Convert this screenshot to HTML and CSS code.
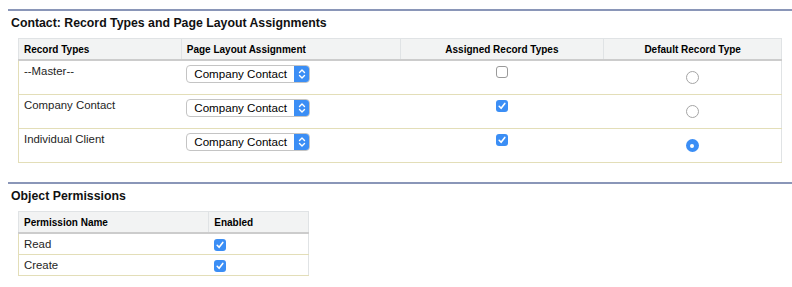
FILE: index.html
```html
<!DOCTYPE html>
<html lang="en">
<head>
    <meta charset="UTF-8">
    <title>Contact Record Types</title>
    <link rel="stylesheet" href="styles.css">
</head>
<body>
    <div class="section">
        <h2 class="section-title">Contact: Record Types and Page Layout Assignments</h2>
        <table class="list record-table">
            <thead>
                <tr>
                    <th class="col-type">Record Types</th>
                    <th class="col-layout">Page Layout Assignment</th>
                    <th class="col-assigned center">Assigned Record Types</th>
                    <th class="col-default center">Default Record Type</th>
                </tr>
            </thead>
            <tbody>
                <tr>
                    <td>--Master--</td>
                    <td>
                        <div class="select">
                            <span class="select-text">Company Contact</span>
                            <span class="select-arrows"><svg width="8" height="12" viewBox="0 0 8 12"><path d="M1.5 4.5 L4 2 L6.5 4.5 M1.5 7.5 L4 10 L6.5 7.5" fill="none" stroke="#fff" stroke-width="1.4" stroke-linecap="round" stroke-linejoin="round"/></svg></span>
                        </div>
                    </td>
                    <td class="center"><span class="check"></span></td>
                    <td class="center"><span class="radio"></span></td>
                </tr>
                <tr>
                    <td>Company Contact</td>
                    <td>
                        <div class="select">
                            <span class="select-text">Company Contact</span>
                            <span class="select-arrows"><svg width="8" height="12" viewBox="0 0 8 12"><path d="M1.5 4.5 L4 2 L6.5 4.5 M1.5 7.5 L4 10 L6.5 7.5" fill="none" stroke="#fff" stroke-width="1.4" stroke-linecap="round" stroke-linejoin="round"/></svg></span>
                        </div>
                    </td>
                    <td class="center"><span class="check checked"><svg width="12" height="12" viewBox="0 0 12 12"><path d="M3.2 6.3 L5.1 8.3 L8.8 3.4" fill="none" stroke="#fff" stroke-width="1.6" stroke-linecap="round" stroke-linejoin="round"/></svg></span></td>
                    <td class="center"><span class="radio"></span></td>
                </tr>
                <tr>
                    <td>Individual Client</td>
                    <td>
                        <div class="select">
                            <span class="select-text">Company Contact</span>
                            <span class="select-arrows"><svg width="8" height="12" viewBox="0 0 8 12"><path d="M1.5 4.5 L4 2 L6.5 4.5 M1.5 7.5 L4 10 L6.5 7.5" fill="none" stroke="#fff" stroke-width="1.4" stroke-linecap="round" stroke-linejoin="round"/></svg></span>
                        </div>
                    </td>
                    <td class="center"><span class="check checked"><svg width="12" height="12" viewBox="0 0 12 12"><path d="M3.2 6.3 L5.1 8.3 L8.8 3.4" fill="none" stroke="#fff" stroke-width="1.6" stroke-linecap="round" stroke-linejoin="round"/></svg></span></td>
                    <td class="center"><span class="radio selected"></span></td>
                </tr>
            </tbody>
        </table>
    </div>

    <div class="section">
        <h2 class="section-title">Object Permissions</h2>
        <table class="list perm-table">
            <thead>
                <tr>
                    <th class="col-name">Permission Name</th>
                    <th class="col-enabled">Enabled</th>
                </tr>
            </thead>
            <tbody>
                <tr>
                    <td>Read</td>
                    <td><span class="check checked"><svg width="12" height="12" viewBox="0 0 12 12"><path d="M3.2 6.3 L5.1 8.3 L8.8 3.4" fill="none" stroke="#fff" stroke-width="1.6" stroke-linecap="round" stroke-linejoin="round"/></svg></span></td>
                </tr>
                <tr>
                    <td>Create</td>
                    <td><span class="check checked"><svg width="12" height="12" viewBox="0 0 12 12"><path d="M3.2 6.3 L5.1 8.3 L8.8 3.4" fill="none" stroke="#fff" stroke-width="1.6" stroke-linecap="round" stroke-linejoin="round"/></svg></span></td>
                </tr>
            </tbody>
        </table>
    </div>
</body>
</html>
```

FILE: styles.css
```css
body {
    margin: 0;
    padding: 9px 0 0 8px;
    background-color: #ffffff;
    font-family: "Liberation Sans", Arial, sans-serif;
    color: #1e1e1e;
}

.section {
    border-top: 2px solid #8a96b8;
    margin-bottom: 19px;
}

.section-title {
    margin: 0;
    padding: 5px 3px 0 3px;
    font-size: 12.3px;
    line-height: 15px;
    font-weight: bold;
    color: #111111;
}

.list {
    border-collapse: collapse;
    margin: 7px 0 0 10px;
    border: 1px solid #e0e3e5;
    border-bottom-color: #e3deb8;
    border-left-color: #e3deb8;
}

.list th {
    background-color: #f2f3f3;
    font-size: 10px;
    font-weight: bold;
    text-align: left;
    padding: 0 5px;
    height: 20px;
    border-bottom: 2px solid #cccccc;
    border-left: 1px solid #e0e3e5;
    color: #000000;
}

.list td {
    font-size: 11.4px;
    padding: 4px 5px 0 5px;
    vertical-align: top;
    border-top: 1px solid #e3deb8;
}

.list th.center,
.list td.center {
    text-align: center;
}

.record-table {
    width: 764px;
}

.record-table td {
    height: 29px;
}

.col-type { width: 152px; }
.col-layout { width: 208px; }
.col-assigned { width: 193px; }
.col-default { width: 167px; }

.perm-table {
    width: 291px;
}

.perm-table td {
    height: 16px;
    padding-top: 4px;
}

.col-name { width: 180px; }
.col-enabled { width: 89px; }

.select {
    display: inline-flex;
    align-items: stretch;
    width: 122px;
    height: 16px;
    border: 1px solid #c4c4c4;
    border-radius: 4px;
    background-color: #ffffff;
    overflow: hidden;
    box-sizing: content-box;
}

.select-text {
    flex: 1;
    font-size: 11.6px;
    line-height: 16px;
    padding-left: 7px;
    color: #000000;
}

.select-arrows {
    width: 15px;
    background-color: #3b8ef5;
    display: flex;
    align-items: center;
    justify-content: center;
}

.check {
    display: inline-block;
    width: 10px;
    height: 10px;
    border: 1px solid #9a9a9a;
    border-radius: 3px;
    background-color: #ffffff;
    vertical-align: top;
    margin-top: 1px;
}

.check.checked {
    width: 12px;
    height: 12px;
    border: none;
    background-color: #3b8ef5;
}

.check svg {
    display: block;
}

.radio {
    display: inline-block;
    width: 11px;
    height: 11px;
    border: 1px solid #a5a5a5;
    border-radius: 50%;
    background-color: #ffffff;
    margin-top: 6px;
    position: relative;
}

.radio.selected {
    width: 13px;
    height: 13px;
    border: none;
    background-color: #3b8ef5;
}

.radio.selected::after {
    content: "";
    position: absolute;
    left: 4.5px;
    top: 4.5px;
    width: 4px;
    height: 4px;
    border-radius: 50%;
    background-color: #ffffff;
}
```
